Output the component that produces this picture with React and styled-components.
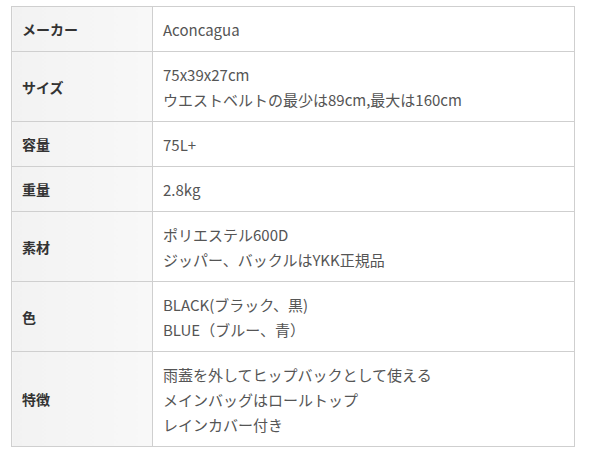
import React from 'react'
import styled, { createGlobalStyle } from 'styled-components'

const GlobalStyle = createGlobalStyle`
    body {
        margin: 0;
        background: #fff;
        font-family: "Noto Sans CJK JP", "Noto Sans", sans-serif;
    }
`

const specs = [
    { label: 'メーカー', lines: ['Aconcagua'] },
    { label: 'サイズ', lines: ['75x39x27cm', 'ウエストベルトの最少は89cm,最大は160cm'] },
    { label: '容量', lines: ['75L+'] },
    { label: '重量', lines: ['2.8kg'] },
    { label: '素材', lines: ['ポリエステル600D', 'ジッパー、バックルはYKK正規品'] },
    { label: '色', lines: ['BLACK(ブラック、黒)', 'BLUE（ブルー、青）'] },
    { label: '特徴', lines: ['雨蓋を外してヒップバックとして使える', 'メインバッグはロールトップ', 'レインカバー付き'] },
]

const App = () => {
    return (
        <>
            <GlobalStyle />
            <Wrap>
                <SpecTable>
                    <tbody>
                        {specs.map((row, i) => (
                            <tr key={i}>
                                <Label>{row.label}</Label>
                                <Value>
                                    {row.lines.map((line, j) => (
                                        <Line key={j}>{line}</Line>
                                    ))}
                                </Value>
                            </tr>
                        ))}
                    </tbody>
                </SpecTable>
            </Wrap>
        </>
    )
}

export default App

const Wrap = styled.div`
    padding: 6px 0 0 11px;
`
const SpecTable = styled.table`
    width: 564px;
    border-collapse: collapse;
    border: 1px solid #cfcfcf;
`
const Label = styled.th`
    width: 120px;
    padding: 10px 10px 9px;
    text-align: left;
    vertical-align: middle;
    font-size: 14px;
    font-weight: 700;
    color: #333;
    line-height: 25px;
    background: linear-gradient(to right, #f2f2f2, #f8f8f8);
    border: 1px solid #cfcfcf;
`
const Value = styled.td`
    padding: 10px 10px 9px;
    vertical-align: middle;
    font-size: 15px;
    color: #555;
    line-height: 25px;
    border: 1px solid #cfcfcf;
`
const Line = styled.div`
    white-space: nowrap;
    height: 25px;
`
